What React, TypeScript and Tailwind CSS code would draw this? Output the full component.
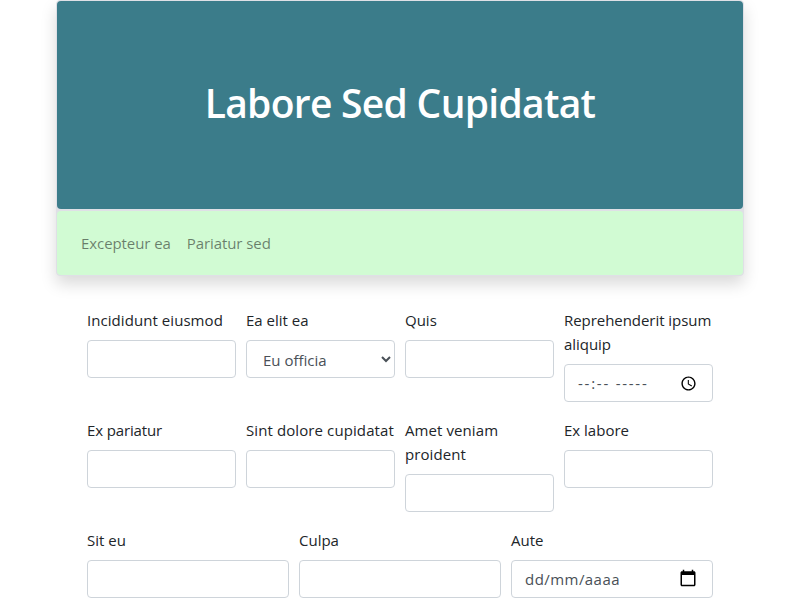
import type { ReactNode } from "react";

const control =
  "block h-[38px] w-full rounded border border-[#ced4da] bg-white text-[#495057]";

function Field({ label, spacing, children }: { label: string; spacing: string; children?: ReactNode }) {
  return (
    <div className="mb-4">
      <label className={`mb-2 block whitespace-pre ${spacing}`}>{label}</label>
      {children ?? <input type="text" className={`${control} px-3`} />}
    </div>
  );
}

function ClockIcon() {
  return (
    <svg className="h-[17px] w-[17px]" viewBox="0 0 24 24" fill="#000">
      <path d="M12 2C6.5 2 2 6.5 2 12s4.5 10 10 10 10-4.5 10-10S17.5 2 12 2zm0 18c-4.4 0-8-3.6-8-8s3.6-8 8-8 8 3.6 8 8-3.6 8-8 8zm.5-13H11v6l5.2 3.2.8-1.3-4.5-2.7V7z" />
    </svg>
  );
}

function CalendarIcon() {
  return (
    <svg className="-mt-0.5 h-[18px] w-[18px]" viewBox="0 0 24 24" fill="#000">
      <path d="M20 3h-1V1h-2v2H7V1H5v2H4c-1.1 0-2 .9-2 2v16c0 1.1.9 2 2 2h16c1.1 0 2-.9 2-2V5c0-1.1-.9-2-2-2zm0 18H4V8h16v13z" />
    </svg>
  );
}

export default function App() {
  return (
    <div className="h-[600px] overflow-hidden bg-white font-['Open_Sans','Noto_Sans',sans-serif] text-[15px] leading-6 font-normal text-[#212529]">
      <div className="mx-auto w-[688px]">
        <header className="rounded border border-[#dfe0e6] bg-[#dfe0e6] shadow-[0_8px_16px_rgba(0,0,0,0.15)]">
          <div className="flex h-[208px] items-center justify-center rounded bg-[#3b7c8a] pb-[5px]">
            <h1 className="text-[39px] leading-[48px] font-semibold tracking-[-0.7px] text-white">Labore Sed Cupidatat</h1>
          </div>
          <nav className="mt-0.5 flex h-16 items-center gap-4 rounded bg-[#d1fbd3] px-6 tracking-[-0.08px] text-black/50">
            <a>Excepteur ea</a>
            <a>Pariatur sed</a>
          </nav>
        </header>
        <form className="px-[31px] pt-8">
          <div className="grid grid-cols-4 gap-x-[10px]">
            <Field label="Incididunt eiusmod" spacing="tracking-[0.06px]" />
            <Field label="Ea elit ea" spacing="tracking-normal">
              <select className={`${control} px-3 pt-0.5`}>
                <option>Eu officia</option>
              </select>
            </Field>
            <Field label="Quis" spacing="tracking-normal" />
            <Field label={"Reprehenderit ipsum\naliquip"} spacing="tracking-[-0.05px]">
              <div className={`${control} flex items-center justify-between pr-[15px] pl-[13px]`}>
                <span className="tracking-[1.75px] whitespace-pre">--:-- -----</span>
                <ClockIcon />
              </div>
            </Field>
          </div>
          <div className="grid grid-cols-4 gap-x-[10px]">
            <Field label="Ex pariatur" spacing="tracking-[-0.14px]" />
            <Field label="Sint dolore cupidatat" spacing="tracking-[0.1px]" />
            <Field label={"Amet veniam\nproident"} spacing="tracking-[0.09px]" />
            <Field label="Ex labore" spacing="tracking-normal" />
          </div>
          <div className="grid grid-cols-3 gap-x-[10px]">
            <Field label="Sit eu" spacing="tracking-normal" />
            <Field label="Culpa" spacing="tracking-normal" />
            <Field label="Aute" spacing="tracking-normal">
              <div className={`${control} flex items-center justify-between pr-[15px] pl-[13px]`}>
                <span className="tracking-[0.45px]">dd/mm/aaaa</span>
                <CalendarIcon />
              </div>
            </Field>
          </div>
        </form>
      </div>
    </div>
  );
}
